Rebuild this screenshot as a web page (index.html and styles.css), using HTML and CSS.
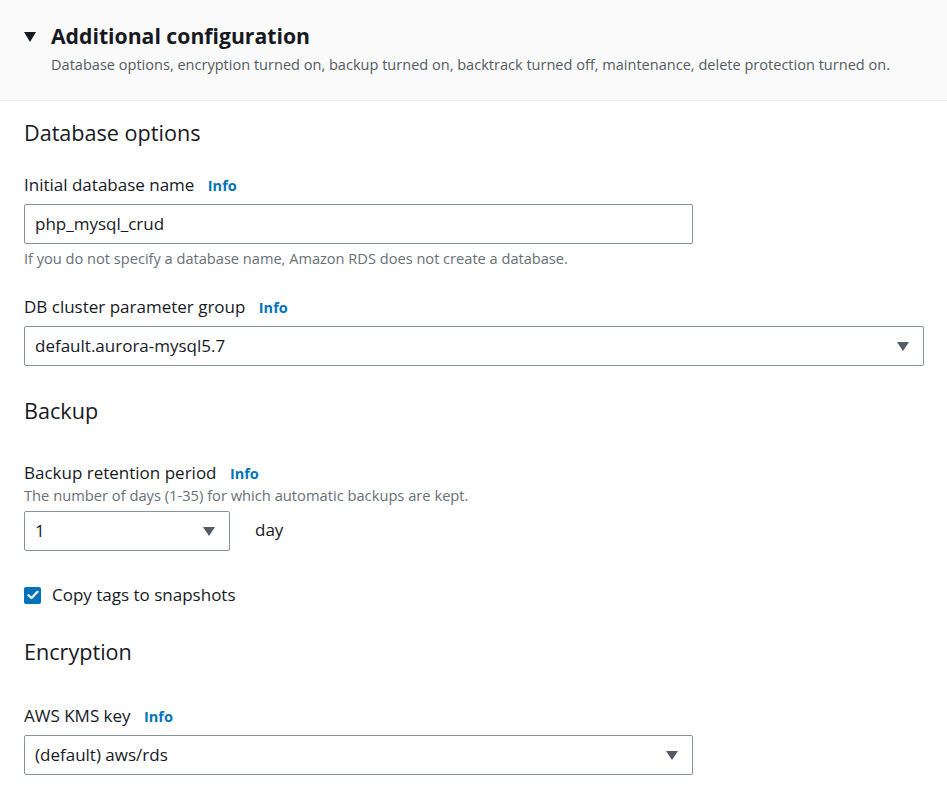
FILE: index.html
```html
<!DOCTYPE html>
<html>
<head>
<meta charset="utf-8">
<link rel="stylesheet" href="styles.css">
</head>
<body>
<div class="panel">
  <div class="panel-header">
    <div class="title-row">
      <span class="caret-down"></span>
      <h2 class="title">Additional configuration</h2>
    </div>
    <div class="subtitle">Database options, encryption turned on, backup turned on, backtrack turned off, maintenance, delete protection turned on.</div>
  </div>
  <div class="panel-body">
    <h3 class="section-title first">Database options</h3>

    <div class="field f-dbname">
      <div class="label">Initial database name <a class="info">Info</a></div>
      <div class="input half">php_mysql_crud</div>
      <div class="hint">If you do not specify a database name, Amazon RDS does not create a database.</div>
    </div>

    <div class="field f-param">
      <div class="label">DB cluster parameter group <a class="info">Info</a></div>
      <div class="input select full">default.aurora-mysql5.7<span class="sel-caret"></span></div>
    </div>

    <h3 class="section-title s-backup">Backup</h3>

    <div class="field f-retention">
      <div class="label">Backup retention period <a class="info">Info</a></div>
      <div class="desc">The number of days (1-35) for which automatic backups are kept.</div>
      <div class="inline-row">
        <div class="input select small">1<span class="sel-caret"></span></div>
        <span class="unit">day</span>
      </div>
    </div>

    <label class="check-row">
      <span class="checkbox"><svg width="12" height="10" viewBox="0 0 12 10"><path d="M1.5 5.2 L4.5 8 L10.5 1.8" fill="none" stroke="#fff" stroke-width="2.2" stroke-linecap="round" stroke-linejoin="round"/></svg></span>
      <span class="check-label">Copy tags to snapshots</span>
    </label>

    <h3 class="section-title s-enc">Encryption</h3>

    <div class="field f-kms">
      <div class="label">AWS KMS key <a class="info">Info</a></div>
      <div class="input select half">(default) aws/rds<span class="sel-caret"></span></div>
    </div>
  </div>
</div>
</body>
</html>
```

FILE: styles.css
```css
* { box-sizing: border-box; }
html, body { margin: 0; padding: 0; background: #ffffff; }
body {
  font-family: "Open Sans", "Noto Sans", sans-serif;
  color: #16191f;
  width: 947px;
}
.panel-header {
  background: #fafafa;
  border-bottom: 1px solid #eaeded;
  padding: 22px 24px 25px 24px;
  height: 101px;
}
.title-row {
  display: flex;
  align-items: center;
  height: 28px;
}
.caret-down {
  width: 0; height: 0;
  border-left: 6px solid transparent;
  border-right: 6px solid transparent;
  border-top: 10px solid #16191f;
  margin-right: 15px;
  margin-top: 1px;
}
.title {
  margin: 0;
  font-size: 21.2px;
  font-weight: 700;
  line-height: 28px;
}
.subtitle {
  margin-left: 27px;
  margin-top: 4px;
  font-size: 14.55px;
  line-height: 20px;
  color: #545b64;
}
.panel-body {
  padding: 0 24px;
}
.section-title {
  margin: 0;
  font-size: 21.6px;
  font-weight: 400;
  line-height: 28px;
}
.section-title.first { margin-top: 18px; }
.s-backup { margin-top: 31px; }
.s-enc { margin-top: 32px; }
.label {
  font-size: 17px;
  line-height: 22px;
  color: #16191f;
}
.info {
  color: #0073bb;
  font-weight: 700;
  font-size: 14.5px;
  margin-left: 9px;
}
.field .input { margin-top: 7px; }
.f-dbname { margin-top: 27px; }
.f-param { margin-top: 28px; }
.f-retention { margin-top: 37px; }
.f-kms { margin-top: 39px; }
.input {
  height: 40px;
  border: 1px solid #879596;
  border-radius: 2px;
  padding: 0 10px;
  font-size: 17px;
  line-height: 38px;
  color: #16191f;
  background: #fff;
  position: relative;
}
.half { width: 669px; }
.full { width: 900px; }
.small { width: 206px; }
.sel-caret {
  position: absolute;
  right: 14px;
  top: 15px;
  width: 0; height: 0;
  border-left: 6px solid transparent;
  border-right: 6px solid transparent;
  border-top: 9px solid #545b64;
}
.hint {
  margin-top: 4px;
  font-size: 14.6px;
  line-height: 20px;
  color: #687078;
}
.desc {
  font-size: 14.7px;
  line-height: 20px;
  color: #687078;
  margin-top: 0;
}
.f-retention .inline-row { margin-top: 6px; display: flex; align-items: center; }
.f-retention .input { margin-top: 0; }
.unit {
  margin-left: 25px;
  font-size: 17px;
  line-height: 22px;
  margin-top: -2px;
}
.check-row {
  display: flex;
  align-items: center;
  margin-top: 33px;
  height: 22px;
}
.checkbox {
  width: 17px; height: 17px;
  background: #0073bb;
  border-radius: 2px;
  display: flex;
  align-items: center;
  justify-content: center;
  margin-right: 11px;
}
.check-label {
  font-size: 17px;
  line-height: 22px;
}
```
